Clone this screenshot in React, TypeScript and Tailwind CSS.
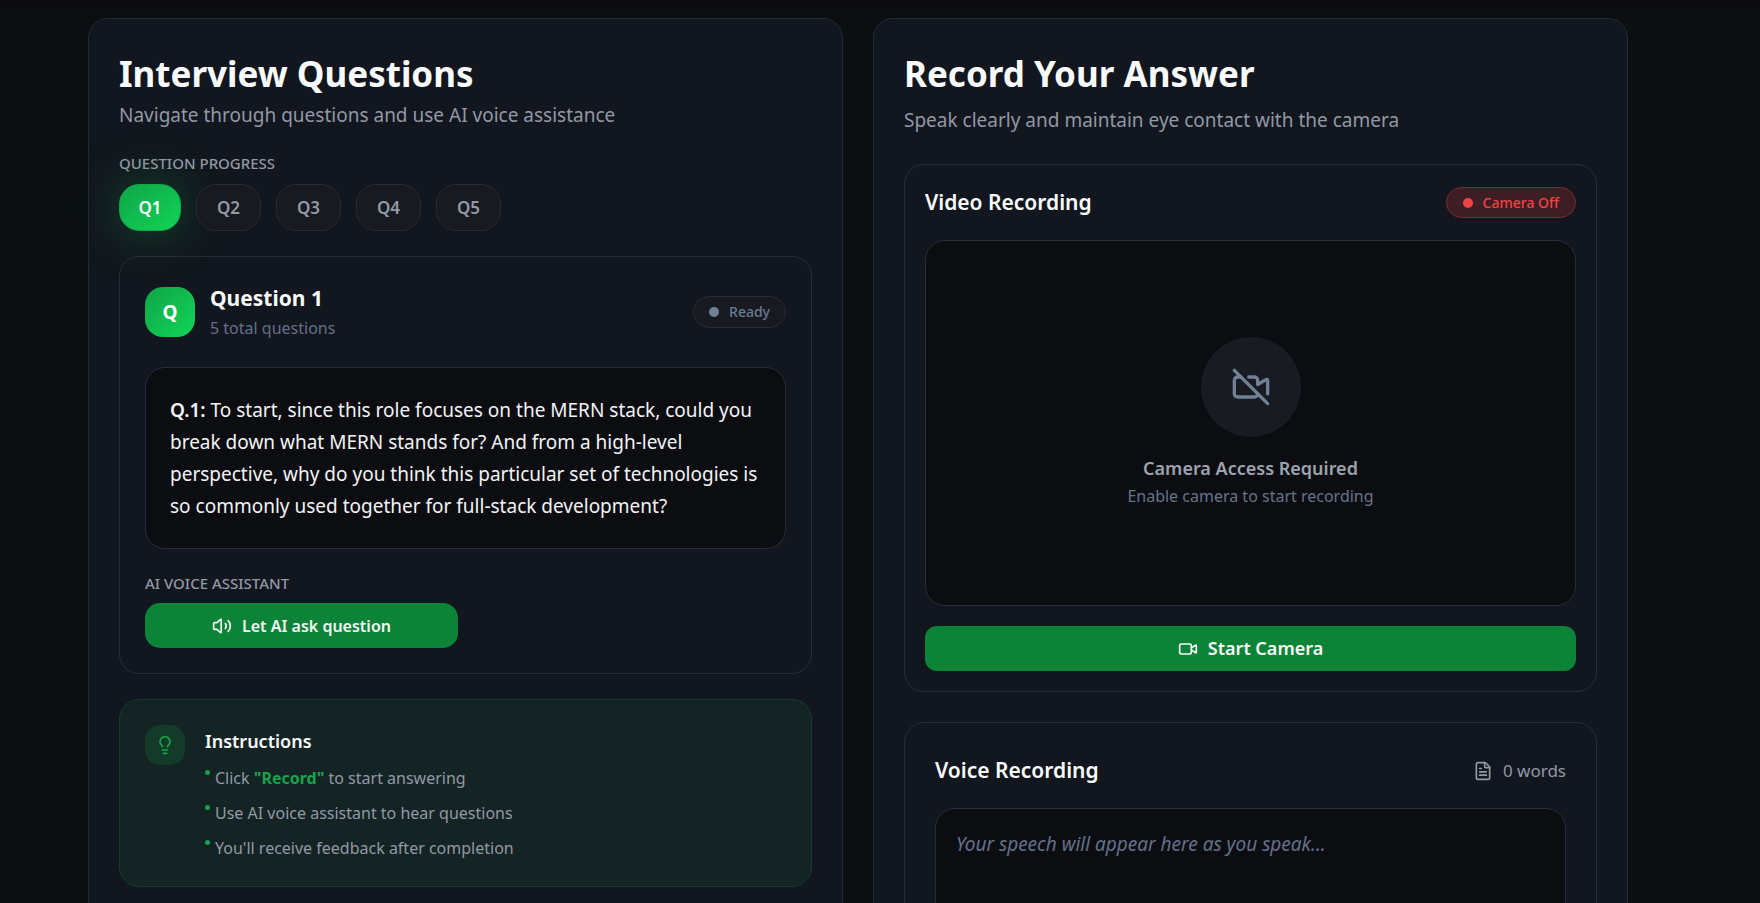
import { useState } from "react";
import type { ReactNode } from "react";
import { FileText, Lightbulb, Video, VideoOff, Volume2 } from "lucide-react";

const questions = ["Q1", "Q2", "Q3", "Q4", "Q5"];

function Panel({ children }: { children: ReactNode }) {
  return (
    <section className="min-w-0 rounded-[20px] border border-[#202a38] bg-[#12161e] p-[30px]">
      {children}
    </section>
  );
}

function SmallLabel({ children }: { children: ReactNode }) {
  return (
    <h3 className="text-[15px] leading-5 font-medium text-[#9298a5] uppercase">
      {children}
    </h3>
  );
}

function QuestionPanel() {
  const [active, setActive] = useState(0);
  return (
    <Panel>
      <h1 className="text-[35px] leading-[50px] font-bold text-[#f9fafb]">Interview Questions</h1>
      <p className="text-[19px] leading-8 text-[#9298a5]">
        Navigate through questions and use AI voice assistance
      </p>
      <div className="mt-[22px]">
        <SmallLabel>Question Progress</SmallLabel>
      </div>
      <nav className="mt-[11px] flex gap-[15px]" aria-label="Questions">
        {questions.map((q, i) => (
          <button
            key={q}
            type="button"
            onClick={() => setActive(i)}
            className={
              i === active
                ? "h-[47px] w-[62px] rounded-[20px] border border-[#16a34a] bg-linear-to-br from-[#10a548] to-[#10d557] text-[17px] font-semibold text-white shadow-[0_0_50px_rgba(22,163,74,0.4)]"
                : "h-[47px] w-[65px] rounded-[20px] border border-[#262a34] bg-[#181a21] text-[17px] font-semibold text-[#9298a5]"
            }
          >
            {q}
          </button>
        ))}
      </nav>

      <article className="mt-[25px] rounded-[20px] border border-[#272d38] p-[25px]">
        <header className="flex items-center gap-[15px]">
          <div className="flex size-[50px] items-center justify-center rounded-[18px] bg-linear-to-br from-[#10a548] to-[#10d557] text-[19px] font-bold text-white">
            Q
          </div>
          <div className="grow">
            <h2 className="text-[21px] leading-[32px] font-bold text-[#f9fafb]">Question 1</h2>
            <p className="text-[16px] leading-[28px] text-[#64708a]">5 total questions</p>
          </div>
          <span className="flex h-8 items-center gap-2.5 rounded-full border border-[#262a34] bg-[#181a21] px-[15px] text-sm font-medium text-[#6b7a90]">
            <span className="size-2.5 rounded-full bg-[#718096]" />
            Ready
          </span>
        </header>
        <p className="mt-[25px] rounded-[20px] border border-[#272d38] bg-[#0c0d11] px-6 py-[26px] text-[19px] leading-8 text-[#f3f4f6]">
          <strong className="font-semibold">Q.1:</strong> To start, since this role focuses on the
          MERN stack, could you break down what MERN stands for? And from a high-level perspective,
          why do you think this particular set of technologies is so commonly used together for
          full-stack development?
        </p>
        <div className="mt-6">
          <SmallLabel>AI Voice Assistant</SmallLabel>
        </div>
        <button
          type="button"
          className="mt-[10px] flex h-[45px] w-[313px] items-center justify-center gap-2.5 rounded-[15px] bg-[#0b8437] text-[16px] font-semibold text-[#f3f4f6]"
        >
          <Volume2 className="size-5" strokeWidth={2} />
          Let AI ask question
        </button>
      </article>

      <aside className="mt-[25px] flex gap-5 rounded-[20px] border border-[#143c2a] bg-[#142424] p-[25px]">
        <div className="flex size-10 shrink-0 items-center justify-center rounded-[15px] bg-[#143b2a]">
          <Lightbulb className="size-5 text-[#16a34a]" strokeWidth={2} />
        </div>
        <div>
          <h2 className="text-[18px] leading-[32px] font-semibold text-[#f9fafb]">Instructions</h2>
          <ul className="mt-[8px] flex flex-col gap-[9px] text-[16px] leading-[26px] text-[#9298a5]">
            <li className="flex gap-[5px]">
              <span className="mt-[5px] size-[5px] rounded-full bg-[#16a34a]" />
              <span>
                Click <strong className="font-bold text-[#16a34a]">"Record"</strong> to start
                answering
              </span>
            </li>
            <li className="flex gap-[5px]">
              <span className="mt-[5px] size-[5px] rounded-full bg-[#16a34a]" />
              <span>Use AI voice assistant to hear questions</span>
            </li>
            <li className="flex gap-[5px]">
              <span className="mt-[5px] size-[5px] rounded-full bg-[#16a34a]" />
              <span>You'll receive feedback after completion</span>
            </li>
          </ul>
        </div>
      </aside>
    </Panel>
  );
}

function RecordPanel() {
  return (
    <Panel>
      <h1 className="text-[35px] leading-[50px] font-bold text-[#f9fafb]">Record Your Answer</h1>
      <p className="mt-[5px] text-[19px] leading-8 text-[#9298a5]">
        Speak clearly and maintain eye contact with the camera
      </p>

      <section className="mt-7 rounded-[20px] border border-[#272d38] p-5">
        <header className="flex h-[35px] items-center justify-between">
          <h2 className="text-[21px] leading-[35px] font-semibold text-[#f9fafb]">Video Recording</h2>
          <span className="flex h-[31px] items-center gap-2.5 rounded-full border border-[#7a2930] bg-[#3d1e24] px-4 text-sm font-medium text-[#ef4444]">
            <span className="size-2.5 rounded-full bg-[#ef4444]" />
            Camera Off
          </span>
        </header>
        <div className="mt-5 flex h-[366px] flex-col items-center justify-center rounded-[20px] border border-[#272d38] bg-[#0c0d11]">
          <div className="flex size-[100px] items-center justify-center rounded-full bg-[#181b22]">
            <VideoOff className="size-10 text-[#718096]" strokeWidth={2} />
          </div>
          <p className="mt-4 text-[18px] leading-[30px] font-semibold text-[#9ca3af]">
            Camera Access Required
          </p>
          <p className="text-[16px] leading-[26px] text-[#64748b]">
            Enable camera to start recording
          </p>
        </div>
        <button
          type="button"
          className="mt-5 flex h-[45px] w-full items-center justify-center gap-2.5 rounded-xl bg-[#0b8437] text-[18px] font-semibold text-[#f9fafb]"
        >
          <Video className="size-5" strokeWidth={2} />
          Start Camera
        </button>
      </section>

      <section className="mt-[30px] rounded-[20px] border border-[#272d38] p-[30px]">
        <header className="flex items-center justify-between">
          <h2 className="text-[21px] leading-[35px] font-semibold text-[#f9fafb]">
            <label htmlFor="transcript">Voice Recording</label>
          </h2>
          <span className="flex items-center gap-2.5 text-[17px] text-[#9298a5]">
            <FileText className="size-5" strokeWidth={2} />0 words
          </span>
        </header>
        <textarea
          id="transcript"
          placeholder="Your speech will appear here as you speak..."
          className="mt-5 block h-[150px] w-full resize-none rounded-[20px] border border-[#272d38] bg-[#0c0d11] p-5 text-[19px] leading-[30px] text-[#f3f4f6] outline-none placeholder:text-[#64708a] placeholder:italic"
        />
      </section>
    </Panel>
  );
}

export default function App() {
  return (
    <main className="min-h-screen bg-[#0b0f12] bg-linear-to-b from-[#0b0b0e] to-[#0b0f12] to-[20px] pt-[18px] pr-[132px] pb-[30px] pl-[88px] font-['Noto_Sans',sans-serif]">
      <div className="grid grid-cols-2 gap-[30px]">
        <QuestionPanel />
        <RecordPanel />
      </div>
    </main>
  );
}
